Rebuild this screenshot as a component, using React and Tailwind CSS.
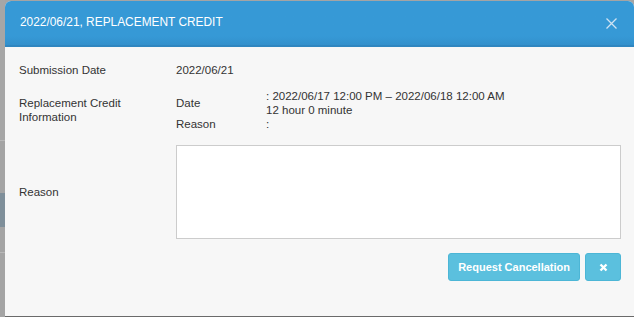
import { useState } from 'react';

const font = { fontFamily: '"Liberation Sans", Arial, sans-serif' };

const BackdropStrip = () => (
  <div className="flex w-[5px] shrink-0 flex-col">
    <div className="h-[140px] bg-[#a6a6a6]" />
    <div className="h-[1px] bg-[#b8b8b8]" />
    <div className="h-[52px] bg-[#a4a4a4]" />
    <div className="h-[34px] bg-[#7f8f9a]" />
    <div className="h-[25px] bg-[#a4a4a4]" />
    <div className="h-[1px] bg-[#b8b8b8]" />
    <div className="flex-1 bg-[#a4a4a4]" />
  </div>
);

const App = () => {
  const [reason, setReason] = useState('');

  return (
    <div className="flex h-[317px] w-[634px] overflow-hidden bg-[#a4a4a4] text-[#333]" style={font}>
      <BackdropStrip />
      <div className="mt-[1px] flex flex-1 flex-col overflow-hidden rounded-t-[6px] bg-[#f7f7f7]">
        <div className="flex h-[46px] shrink-0 items-center justify-between border-b-[2px] border-[#2f86c0] bg-gradient-to-b from-[#3699d6] from-80% to-[#3290cc] pl-[15px] pr-[17px]">
          <h2 className="text-[11.9px] text-white">2022/06/21, REPLACEMENT CREDIT</h2>
          <svg width="11" height="11" viewBox="0 0 11 11" className="text-[#cfe3f3]">
            <path d="M0.5 0.5 L10.5 10.5 M10.5 0.5 L0.5 10.5" stroke="currentColor" strokeWidth="1.3" />
          </svg>
        </div>

        <div className="flex flex-1 flex-col pl-[14px] pr-[13px] pt-[15px] text-[11.5px]">
          <div className="grid grid-cols-[157px_1fr] items-center">
            <span>Submission Date</span>
            <span>2022/06/21</span>
          </div>

          <div className="mt-[10px] grid grid-cols-[157px_1fr]">
            <div className="pt-[7px] leading-[14px]">
              Replacement Credit
              <br />
              Information
            </div>
            <div className="grid grid-cols-[90px_1fr] leading-[14px]">
              <span className="self-center">Date</span>
              <span>
                : 2022/06/17 12:00 PM – 2022/06/18 12:00 AM
                <br />
                12 hour 0 minute
              </span>
              <span>Reason</span>
              <span>:</span>
            </div>
          </div>

          <div className="mt-[14px] grid grid-cols-[157px_1fr] items-center">
            <span>Reason</span>
            <textarea
              value={reason}
              onChange={(e) => setReason(e.target.value)}
              className="h-[94px] w-full resize-none border border-[#cccccc] bg-white"
            />
          </div>

          <div className="mt-[14px] flex justify-end gap-[5px]">
            <button className="h-[28px] rounded-[3px] border border-[#4cb6d6] bg-[#5bc0de] px-[9px] text-[11px] font-bold text-white">
              Request Cancellation
            </button>
            <button className="flex h-[28px] w-[36px] items-center justify-center rounded-[3px] border border-[#4cb6d6] bg-[#5bc0de] text-white">
              <svg width="9" height="9" viewBox="0 0 9 9">
                <path d="M1.5 1.5 L7.5 7.5 M7.5 1.5 L1.5 7.5" stroke="currentColor" strokeWidth="2.4" />
              </svg>
            </button>
          </div>
        </div>
        <div className="h-[1px] bg-[#6a6a6a]" />
      </div>
    </div>
  );
};

export default App;
